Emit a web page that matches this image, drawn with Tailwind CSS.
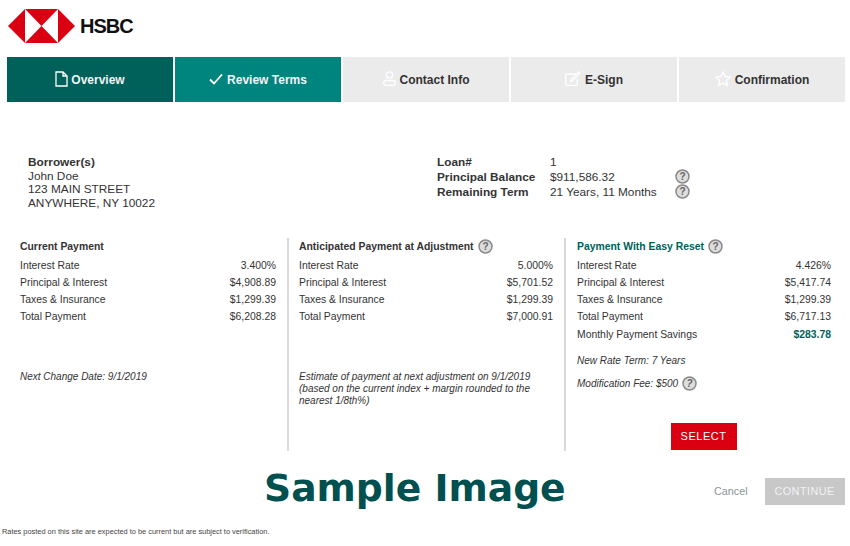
<!DOCTYPE html>
<html lang="en">
<head>
  <meta charset="UTF-8" />
  <meta name="viewport" content="width=device-width, initial-scale=1" />
  <title>Review Terms</title>
  <script src="https://cdn.jsdelivr.net/npm/@tailwindcss/browser@4"></script>
</head>
<body class="bg-white text-[#333] font-['Liberation_Sans',Arial,sans-serif] overflow-hidden">
  <div class="w-[850px] h-[546px] flex flex-col">

    <!-- Logo -->
    <div class="h-[57px] flex items-start pl-[8px] pt-[9px] shrink-0">
      <svg width="67" height="34" viewBox="0 0 67 34">
        <polygon points="0,17 17,0 50,0 67,17 50,34 17,34" fill="#db0011" />
        <polygon points="17,0 33.5,17 17,34" fill="#fff" />
        <polygon points="50,0 33.5,17 50,34" fill="#fff" />
      </svg>
      <span class="ml-[5px] mt-[5px] text-[20px] leading-[24px] font-bold text-[#111] tracking-[-1px]">HSBC</span>
    </div>

    <!-- Pestañas -->
    <div class="flex gap-[2px] ml-[7px] w-[838px] h-[45px] shrink-0 text-[12px] font-bold">
      <div class="w-[166px] flex items-center justify-center gap-[3px] bg-[#00605a] text-[#f0f5f5]">
        <svg width="13" height="16" viewBox="0 0 13 16" fill="none" stroke="#fff" stroke-width="1.3" class="-mt-[2px]"><path d="M1 1h7l4 4v10H1zM8 1v4h4" /></svg>
        Overview
      </div>
      <div class="w-[166px] flex items-center justify-center gap-[4px] bg-[#00847e] text-[#f0f5f5]">
        <svg width="14" height="12" viewBox="0 0 14 12" fill="none" stroke="#fff" stroke-width="1.8" class="-mt-[2px]"><path d="M1 6.5l4 4L13 1.5" /></svg>
        Review Terms
      </div>
      <div class="w-[166px] flex items-center justify-center gap-[4px] bg-[#ebebeb]">
        <svg width="13" height="15" viewBox="0 0 13 15" fill="none" stroke="#fff" stroke-width="1.3" class="-mt-[2px]"><circle cx="6.5" cy="4" r="3.2" /><rect x="0.7" y="9.5" width="11.6" height="4.8" rx="2.2" /></svg>
        Contact Info
      </div>
      <div class="w-[166px] flex items-center justify-center gap-[4px] bg-[#ebebeb]">
        <svg width="16" height="15" viewBox="0 0 16 15" fill="none" stroke="#fff" stroke-width="1.3" class="-mt-[2px]"><path d="M11 3H2a1.300 1.300 0 0 0-1.300 1.300v8.900A1.300 1.300 0 0 0 2 14.500h9a1.300 1.300 0 0 0 1.300-1.300V8" /><path d="M13.800 0.900l1.200 1.200-7.500 7.500-2 .8.800-2z" /></svg>
        E-Sign
      </div>
      <div class="w-[166px] flex-1 flex items-center justify-center gap-[4px] bg-[#ebebeb]">
        <svg width="16" height="15" viewBox="0 0 16 15" fill="none" stroke="#fff" stroke-width="1.3" class="-mt-[2px]"><path d="M8 1l2.100 4.500 4.900.6-3.600 3.400.9 4.800L8 11.900l-4.300 2.400.9-4.800L1 6.100l4.900-.6z" /></svg>
        Confirmation
      </div>
    </div>

    <!-- Datos del prestatario -->
    <div class="flex mt-[54px] h-[82px] shrink-0 text-[11.8px] leading-[13.5px]">
      <div class="w-[437px] pl-[28px]">
        <p class="font-bold">Borrower(s)</p>
        <p>John Doe</p>
        <p>123 MAIN STREET</p>
        <p>ANYWHERE, NY 10022</p>
      </div>
      <div class="grid grid-cols-[113px_125px_15px] auto-rows-[14.8px] leading-[14.8px] h-[45px] -mt-[1px]">
        <span class="font-bold">Loan#</span><span>1</span><span></span>
        <span class="font-bold">Principal Balance</span><span>$911,586.32</span>
        <svg width="15" height="15" viewBox="0 0 15 15" class="-mt-[1px]"><circle cx="7.500" cy="7.500" r="6.500" fill="#ddd" stroke="#8a8a8a" stroke-width="1.500" /><text x="7.500" y="11" text-anchor="middle" font-size="10" font-weight="700" fill="#666">?</text></svg>
        <span class="font-bold">Remaining Term</span><span>21 Years, 11 Months</span>
        <svg width="15" height="15" viewBox="0 0 15 15" class="-mt-[1px]"><circle cx="7.500" cy="7.500" r="6.500" fill="#ddd" stroke="#8a8a8a" stroke-width="1.500" /><text x="7.500" y="11" text-anchor="middle" font-size="10" font-weight="700" fill="#666">?</text></svg>
      </div>
    </div>

    <!-- Columnas de pago -->
    <div class="flex ml-[20px] h-[213px] shrink-0 text-[10.4px] leading-[17px]">
      <div class="w-[256px] mr-[11px]">
        <h2 class="font-bold h-[17px] mb-[2px]">Current Payment</h2>
        <div class="flex justify-between"><span>Interest Rate</span><span>3.400%</span></div>
        <div class="flex justify-between"><span>Principal &amp; Interest</span><span>$4,908.89</span></div>
        <div class="flex justify-between"><span>Taxes &amp; Insurance</span><span>$1,299.39</span></div>
        <div class="flex justify-between"><span>Total Payment</span><span>$6,208.28</span></div>
        <p class="italic text-[10px] leading-[12px] mt-[46px]">Next Change Date: 9/1/2019</p>
      </div>
      <div class="w-[277px] border-l-2 border-[#d9d9d9] pl-[10px] pr-[11px]">
        <h2 class="font-bold h-[17px] mb-[2px] flex items-center gap-[4px]">
          Anticipated Payment at Adjustment
          <svg width="15" height="15" viewBox="0 0 15 15"><circle cx="7.500" cy="7.500" r="6.500" fill="#ddd" stroke="#8a8a8a" stroke-width="1.500" /><text x="7.500" y="11" text-anchor="middle" font-size="10" font-weight="700" fill="#666">?</text></svg>
        </h2>
        <div class="flex justify-between"><span>Interest Rate</span><span>5.000%</span></div>
        <div class="flex justify-between"><span>Principal &amp; Interest</span><span>$5,701.52</span></div>
        <div class="flex justify-between"><span>Taxes &amp; Insurance</span><span>$1,299.39</span></div>
        <div class="flex justify-between"><span>Total Payment</span><span>$7,000.91</span></div>
        <p class="italic text-[10px] leading-[12px] mt-[46px]">Estimate of payment at next adjustment on 9/1/2019 (based on the current index + margin rounded to the nearest 1/8th%)</p>
      </div>
      <div class="w-[279px] border-l-2 border-[#d9d9d9] pl-[11px] pr-[12px] flex flex-col">
        <h2 class="font-bold h-[17px] mb-[2px] flex items-center gap-[4px] text-[#00605a]">
          Payment With Easy Reset
          <svg width="15" height="15" viewBox="0 0 15 15"><circle cx="7.500" cy="7.500" r="6.500" fill="#ddd" stroke="#8a8a8a" stroke-width="1.500" /><text x="7.500" y="11" text-anchor="middle" font-size="10" font-weight="700" fill="#666">?</text></svg>
        </h2>
        <div class="flex justify-between"><span>Interest Rate</span><span>4.426%</span></div>
        <div class="flex justify-between"><span>Principal &amp; Interest</span><span>$5,417.74</span></div>
        <div class="flex justify-between"><span>Taxes &amp; Insurance</span><span>$1,299.39</span></div>
        <div class="flex justify-between"><span>Total Payment</span><span>$6,717.13</span></div>
        <div class="flex justify-between mt-[1px]"><span>Monthly Payment Savings</span><span class="font-bold text-[#00605a]">$283.78</span></div>
        <p class="italic text-[10px] leading-[13px] mt-[11px]">New Rate Term: 7 Years</p>
        <p class="italic text-[10px] leading-[15px] mt-[9px] flex items-center gap-[4px]">
          Modification Fee: $500
          <svg width="15" height="15" viewBox="0 0 15 15"><circle cx="7.500" cy="7.500" r="6.500" fill="#ddd" stroke="#8a8a8a" stroke-width="1.500" /><text x="7.500" y="11" text-anchor="middle" font-size="10" font-weight="700" fill="#666">?</text></svg>
        </p>
        <button class="self-center ml-[-1px] mt-[32px] w-[66px] h-[27px] bg-[#db0011] text-white text-[11px] tracking-[0.5px]">SELECT</button>
      </div>
    </div>

    <!-- Pie -->
    <div class="flex items-start h-[66px] shrink-0">
      <span class="ml-[264px] mt-[14px] w-[450px] font-['DejaVu_Sans',sans-serif] font-bold text-[37.7px] leading-[46px] text-[#00504f]">Sample Image</span>
      <span class="mt-[32px] text-[10.8px] leading-[17px] text-[#8a9696]">Cancel</span>
      <button class="ml-[17px] mt-[27px] w-[80px] h-[27px] bg-[#c8c8c8] text-[#f2f2f2] text-[10.8px] tracking-[0.5px]">CONTINUE</button>
    </div>
    <p class="ml-[2px] mt-[10px] text-[7.4px] leading-[10px] text-[#444]">Rates posted on this site are expected to be current but are subject to verification.</p>
  </div>
</body>
</html>
